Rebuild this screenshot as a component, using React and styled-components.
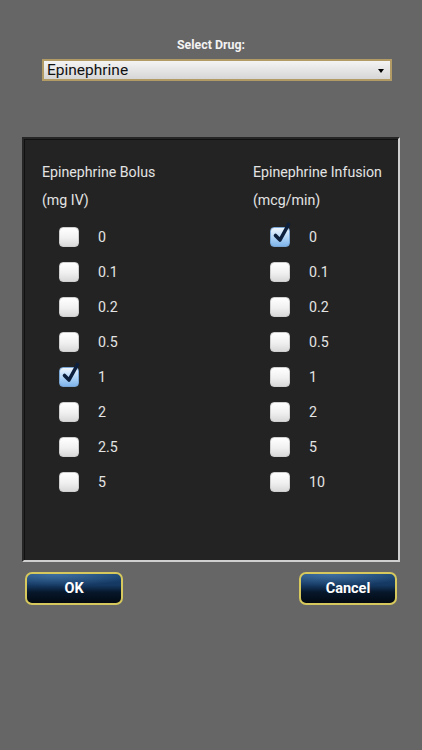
import React from "react";
import styled, { createGlobalStyle } from "styled-components";

const Global = createGlobalStyle`
  html, body { margin: 0; padding: 0; background: #666666; }
  body { font-family: Roboto, "Noto Sans", sans-serif; }
`;

const Page = styled.div`
  width: 422px;
  min-height: 750px;
  background: #666666;
  padding-top: 37px;
  box-sizing: border-box;
`;

const Label = styled.div`
  text-align: center;
  color: #f2f2f2;
  font-weight: 700;
  font-size: 12.4px;
  line-height: 16px;
`;

const Select = styled.div`
  margin: 6px 0 0 42px;
  width: 350px;
  height: 22px;
  box-sizing: border-box;
  border: 2px solid #b39b66;
  background: linear-gradient(#f4f4f4, #d6d6d6);
  display: flex;
  align-items: center;
  justify-content: space-between;
  padding: 0 6px 0 3px;
  font-size: 15.5px;
  color: #111;
`;

const Arrow = styled.span`
  width: 0;
  height: 0;
  border-left: 3px solid transparent;
  border-right: 3px solid transparent;
  border-top: 4px solid #000;
  margin-top: 1px;
`;

const Panel = styled.div`
  margin: 56px 0 0 22px;
  width: 378px;
  height: 425px;
  box-sizing: border-box;
  background: #232323;
  border-top: 2px solid #262626;
  border-left: 2px solid #262626;
  border-right: 2px solid #cfcfcf;
  border-bottom: 2px solid #cfcfcf;
  box-shadow: inset 1px 1px 0 #111;
  display: grid;
  grid-template-columns: 211px 1fr;
  padding: 19px 0 0 18px;
`;

const Column = styled.div`
  display: flex;
  flex-direction: column;
`;

const Heading = styled.div`
  color: #e4e4e4;
  font-size: 14.2px;
  line-height: 28px;
  white-space: nowrap;
  margin-bottom: 5px;
`;

const Row = styled.div`
  display: flex;
  align-items: center;
  height: 35px;
  padding-left: 17px;
`;

const Box = styled.div`
  position: relative;
  width: 20px;
  height: 20px;
  box-sizing: border-box;
  border-radius: 4px;
  border: 1px solid ${(p) => (p.$checked ? "#7aa6d6" : "#cfcfcf")};
  background: ${(p) =>
    p.$checked
      ? "linear-gradient(#eef6fe, #a9d0f5 60%, #7fb4ea)"
      : "linear-gradient(#ffffff, #f0f0f0 55%, #d9d9d9)"};
`;

const Check = styled.svg`
  position: absolute;
  left: 0;
  top: -6px;
  overflow: visible;
`;

const Value = styled.span`
  margin-left: 19px;
  color: #e4e4e4;
  font-size: 14.2px;
`;

const Buttons = styled.div`
  display: flex;
  justify-content: space-between;
  margin: 10px 25px 0 25px;
`;

const Button = styled.button`
  width: 98px;
  height: 33px;
  box-sizing: border-box;
  border: 2px solid #d6c85c;
  border-radius: 7px;
  background:
    radial-gradient(ellipse 120% 60% at 30% 0%, rgba(70, 120, 170, 0.85), rgba(70, 120, 170, 0) 70%),
    linear-gradient(#1b4572 0%, #143760 40%, #07182c 62%, #020912 100%);
  color: #fff;
  font-family: Roboto, "Noto Sans", sans-serif;
  font-weight: 700;
  font-size: 14.5px;
  padding: 0;
`;

const bolus = ["0", "0.1", "0.2", "0.5", "1", "2", "2.5", "5"];
const infusion = ["0", "0.1", "0.2", "0.5", "1", "2", "5", "10"];

function CheckItem({ value, checked }) {
  return (
    <Row>
      <Box $checked={checked}>
        {checked && (
          <Check width="20" height="20" viewBox="0 0 20 20">
            <path
              d="M4.5 13.5 L9 18 L17.5 2.5"
              fill="none"
              stroke="#0c1f3c"
              strokeWidth="3.6"
              strokeLinecap="round"
              strokeLinejoin="round"
            />
          </Check>
        )}
      </Box>
      <Value>{value}</Value>
    </Row>
  );
}

export default function App() {
  return (
    <Page>
      <Global />
      <Label>Select Drug:</Label>
      <Select>
        <span>Epinephrine</span>
        <Arrow />
      </Select>
      <Panel>
        <Column>
          <Heading>
            Epinephrine Bolus
            <br />
            (mg IV)
          </Heading>
          {bolus.map((v) => (
            <CheckItem key={v} value={v} checked={v === "1"} />
          ))}
        </Column>
        <Column>
          <Heading>
            Epinephrine Infusion
            <br />
            (mcg/min)
          </Heading>
          {infusion.map((v) => (
            <CheckItem key={v} value={v} checked={v === "0"} />
          ))}
        </Column>
      </Panel>
      <Buttons>
        <Button>OK</Button>
        <Button>Cancel</Button>
      </Buttons>
    </Page>
  );
}
